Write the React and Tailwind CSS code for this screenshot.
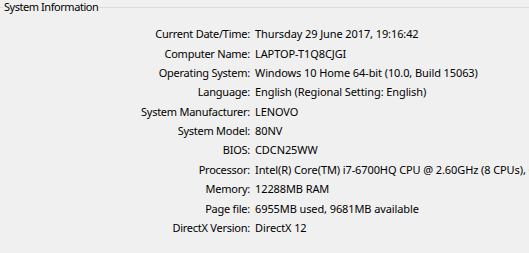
import React from "react";

const rows = [
  ["Current Date/Time:", "Thursday 29 June 2017, 19:16:42"],
  ["Computer Name:", "LAPTOP-T1Q8CJGI"],
  ["Operating System:", "Windows 10 Home 64-bit (10.0, Build 15063)"],
  ["Language:", "English (Regional Setting: English)"],
  ["System Manufacturer:", "LENOVO"],
  ["System Model:", "80NV"],
  ["BIOS:", "CDCN25WW"],
  ["Processor:", "Intel(R) Core(TM) i7-6700HQ CPU @ 2.60GHz (8 CPUs), ~2.6GHz"],
  ["Memory:", "12288MB RAM"],
  ["Page file:", "6955MB used, 9681MB available"],
  ["DirectX Version:", "DirectX 12"],
];

const App = () => {
  return (
    <div
      className="w-[529px] h-[253px] bg-[#f0f0f0] text-black overflow-hidden text-[11px]"
      style={{ fontFamily: '"Noto Sans", "Liberation Sans", sans-serif' }}
    >
      <div className="relative h-[14px]">
        <div className="absolute left-0 right-0 top-[7px] h-px bg-[#dcdcdc]" />
        <span className="absolute left-[3px] top-0 bg-[#f0f0f0] px-px leading-[14px] tracking-[-0.45px]">
          System Information
        </span>
      </div>
      <div className="pt-[11px]">
        {rows.map(([label, value]) => (
          <div key={label} className="flex h-[19.35px] items-center whitespace-nowrap">
            <div className="w-[250px] shrink-0 text-right tracking-[-0.25px]">{label}</div>
            <div className="pl-[5px] tracking-[-0.1px]">{value}</div>
          </div>
        ))}
      </div>
    </div>
  );
};

export default App;
